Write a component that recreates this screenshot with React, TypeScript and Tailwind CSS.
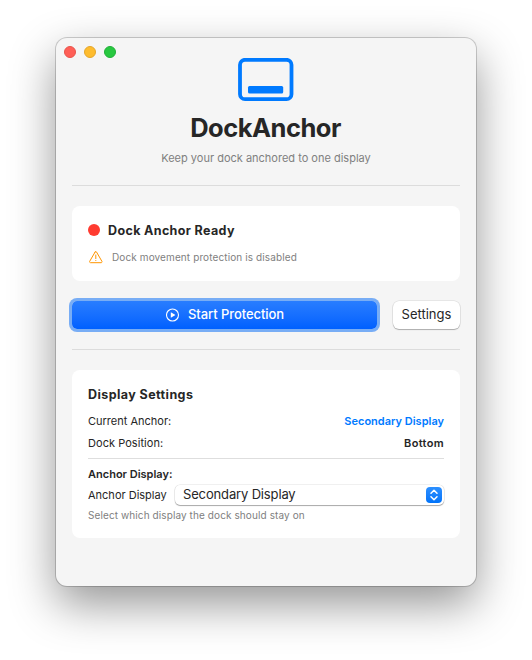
import type { ReactNode } from 'react';

function Card({ className, children }: { className: string; children: ReactNode }) {
  return <section className={`mx-4 rounded-lg bg-white px-4 ${className}`}>{children}</section>;
}

function DockIcon() {
  return (
    <svg width="56" height="44" viewBox="0 0 56 44" className="mx-auto block" fill="#007aff">
      <rect x="2" y="1.8" width="51.5" height="39.4" rx="5" fill="none" stroke="#007aff" strokeWidth="3.8" />
      <rect x="10" y="28" width="35.2" height="7.5" rx="1.5" />
    </svg>
  );
}

function WarningIcon() {
  return (
    <svg width="14" height="14" viewBox="0 0 14 14" fill="none" stroke="#ff9500" strokeLinecap="round" strokeLinejoin="round">
      <path d="M6.1 2 .7 11.3c-.4.7 0 1.4.9 1.4H12c.9 0 1.3-.7.9-1.4L7.5 2c-.3-.6-1.1-.6-1.4 0Z" />
      <path d="M6.8 5v3.6M6.8 10.5v.1" />
    </svg>
  );
}

function PlayIcon() {
  return (
    <svg width="14" height="14" viewBox="0 0 14 14">
      <circle cx="6.5" cy="7" r="6" fill="none" stroke="#fff" strokeWidth="1.1" />
      <path d="M4.8 4.6v4.8q0 .4.4.2l3.9-2.3q.4-.3 0-.6L5.2 4.4q-.4-.2-.4.2Z" fill="#fff" />
    </svg>
  );
}

export default function App() {
  return (
    <main className="h-[660px] w-[532px] overflow-hidden bg-white pt-[38px] pl-[56px] font-['Inter','Liberation_Sans',sans-serif] text-[#262626]">
      <div className="flex h-[548px] w-[420px] flex-col rounded-[11px] bg-[#f5f5f5] pt-2 shadow-[0_0_0_1px_rgba(0,0,0,0.18),0_18px_46px_rgba(0,0,0,0.42)]">
        <div className="flex h-3 gap-2 pl-2">
          <span className="size-3 rounded-full border border-[#e9544b] bg-[#ff5f57]" />
          <span className="size-3 rounded-full border border-[#e5a62a] bg-[#febc2e]" />
          <span className="size-3 rounded-full border border-[#21b038] bg-[#28c840]" />
        </div>
        <header className="text-center">
          <DockIcon />
          <h1 className="mt-[10px] pr-px text-[25.5px] leading-8 font-bold tracking-[-0.5px]">DockAnchor</h1>
          <p className="mt-[6px] text-[11px] leading-4 text-[#808080]">Keep your dock anchored to one display</p>
        </header>
        <hr className="mx-4 mt-[19px] border-[#dcdcdc]" />
        <Card className="mt-5 h-[75px] pt-[14px]">
          <div className="flex h-5 items-center gap-2">
            <span className="size-3 rounded-full bg-[#ff3b30]" />
            <h2 className="pt-[2px] text-[12.5px] leading-5 font-bold tracking-[0.36px]">Dock Anchor Ready</h2>
          </div>
          <div className="mt-[9px] flex h-4 items-center gap-[9px] pl-px">
            <WarningIcon />
            <p className="text-[10px] leading-4 tracking-[0.11px] text-[#808080]">Dock movement protection is disabled</p>
          </div>
        </Card>
        <div className="mx-4 mt-5 flex h-7 justify-between">
          <button className="flex w-[305px] items-center justify-center gap-2 rounded-[5px] bg-linear-to-b from-[#287dff] to-[#0060ff] pl-px text-[13px] font-medium tracking-[-0.06px] text-white shadow-[0_0_0_3px_#78adf5]">
            <PlayIcon />
            Start Protection
          </button>
          <button className="w-[67px] rounded-[6px] bg-white text-[13px] shadow-[0_0_0_0.5px_rgba(0,0,0,0.12),0_1px_1px_rgba(0,0,0,0.25)]">Settings</button>
        </div>
        <hr className="mx-4 mt-5 border-[#dcdcdc]" />
        <Card className="mt-5 h-[168px] pt-[15px]">
          <h2 className="text-[12.5px] leading-5 font-bold tracking-[0.42px]">Display Settings</h2>
          <dl className="mt-2 text-[11px] leading-4">
            <div className="flex justify-between">
              <dt>Current Anchor:</dt>
              <dd className="font-semibold text-[#007aff]">Secondary Display</dd>
            </div>
            <div className="mt-[6px] flex justify-between">
              <dt className="tracking-[0.05px]">Dock Position:</dt>
              <dd className="font-semibold tracking-[0.35px]">Bottom</dd>
            </div>
          </dl>
          <hr className="mt-[7px] border-[#dedede]" />
          <h3 className="mt-[7px] text-[11px] leading-4 font-semibold">Anchor Display:</h3>
          <div className="mt-[3px] flex h-5 items-center justify-between">
            <span className="text-[11px]">Anchor Display</span>
            <button className="flex h-5 w-[269px] items-center justify-between rounded-[5px] bg-white pr-[2px] pl-2 text-[13px] tracking-[-0.15px] shadow-[0_0_0_0.5px_rgba(0,0,0,0.12),0_1px_1px_rgba(0,0,0,0.3)]">
              <span>Secondary Display</span>
              <span className="flex size-4 items-center justify-center rounded-[4px] bg-linear-to-b from-[#2b8fff] to-[#0073fa]">
                <svg width="16" height="16" viewBox="0 0 16 16" fill="none" stroke="#fff" strokeWidth="1.5" strokeLinecap="round" strokeLinejoin="round">
                  <path d="m5 6.2 3-3 3 3M5 9.8l3 3 3-3" />
                </svg>
              </span>
            </button>
          </div>
          <p className="mt-[2px] text-[10px] leading-4 tracking-[0.1px] text-[#808080]">Select which display the dock should stay on</p>
        </Card>
      </div>
    </main>
  );
}
